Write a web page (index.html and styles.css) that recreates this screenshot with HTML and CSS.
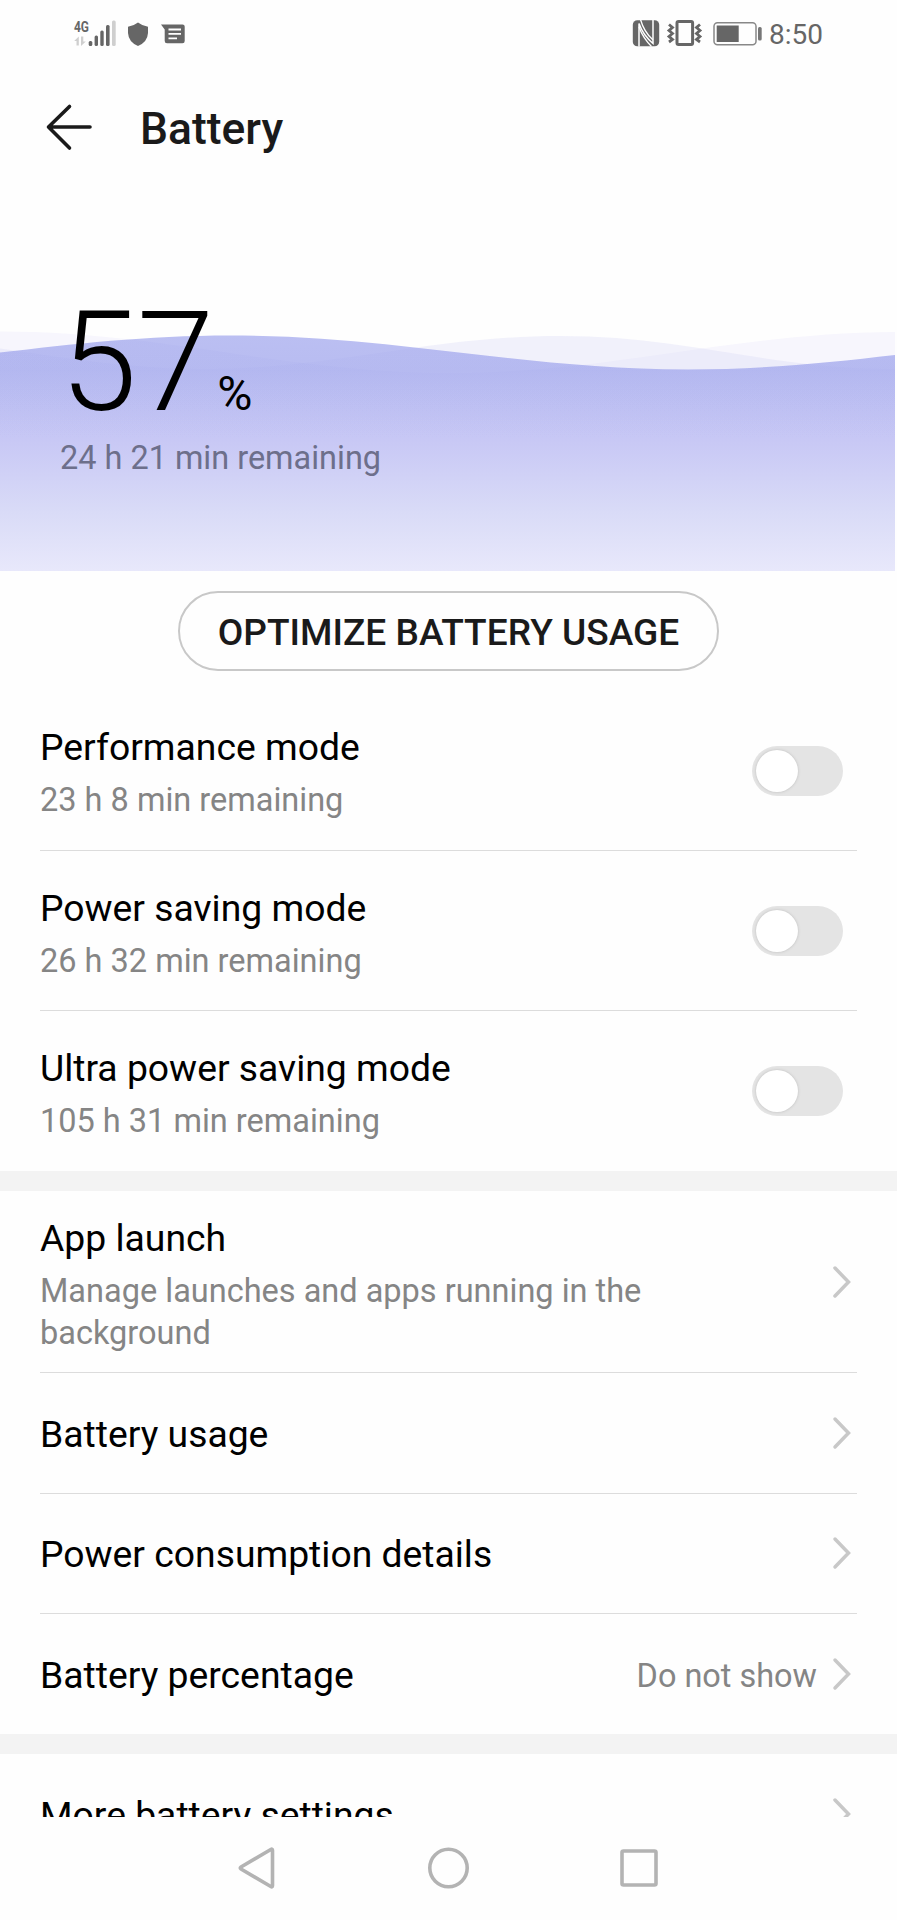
FILE: index.html
```
<!DOCTYPE html>
<html lang="en">
	<head>
		<meta charset="UTF-8">
		<title>Battery</title>
		<link rel="stylesheet" href="styles.css">
	</head>
	<body>
		<div class="screen">
			<div class="status">
				<svg class="status-left" width="120" height="30" viewBox="70 18 120 30">
					<text class="net" x="74" y="32.3" textLength="15" lengthAdjust="spacingAndGlyphs">4G</text>
					<g fill="#cfcfcf">
						<path d="M78.800 45.500V36.500l-4.600 4.500h2.300v4.500zM81 36.500v9.500l4.800-4.600h-2.500V36.500z"/>
						<rect x="112" y="20.500" width="3.700" height="25.500" rx="1.500"/>
					</g>
					<g fill="#666">
						<rect x="88.700" y="41" width="3.600" height="5" rx="1.500"/>
						<rect x="94.600" y="35.500" width="3.400" height="10.500" rx="1.500"/>
						<rect x="100.300" y="30.500" width="3.400" height="15.500" rx="1.500"/>
						<rect x="106" y="25" width="3.600" height="21" rx="1.500"/>
						<path d="M138 22.500Q142.500 26 148 26.700V33Q147.500 42 138 46Q128.500 42 128 33V26.700Q133.500 26 138 22.500z"/>
						<path d="M161 24.500H182.500Q184.700 24.500 184.700 26.500V41Q184.700 43.200 182.500 43.200H167Q164.700 43.200 164.700 41V29.500z"/>
					</g>
					<path d="M168.500 29.500H181M168.500 33.900H181M168.500 38.300H177" stroke="#fff" stroke-width="1.800"/>
				</svg>
				<svg class="status-right" width="132" height="30" viewBox="631 18 132 30">
					<rect x="632.800" y="20.200" width="26.400" height="26" rx="4.500" fill="#666"/>
					<path d="M639 46.500V23.500Q643 35 653 43.500V20" fill="none" stroke="#fff" stroke-width="1.500"/>
					<path d="M640.500 19.500Q644 32 653 40M639 27Q643 38 651.500 46.500" fill="none" stroke="#fff" stroke-width="1.300"/>
					<g fill="none" stroke="#666">
						<rect x="677" y="21.600" width="15.600" height="23" rx="1.500" stroke-width="3"/>
						<path d="M669 24.500l3.500 3-3.500 3 3.500 3-3.500 3 3.500 3-3.500 2.500M700 24.500l-3.500 3 3.500 3-3.500 3 3.500 3-3.500 3 3.500 2.500" stroke-width="2.800"/>
						<rect x="714" y="22.700" width="42" height="22" rx="3.500" stroke="#888" stroke-width="1.500"/>
					</g>
					<rect x="716.700" y="25.500" width="22" height="16.500" fill="#666"/>
					<rect x="758" y="27" width="3.700" height="13.500" rx="1.500" fill="#777"/>
				</svg>
				<span class="clock">8:50</span>
			</div>

			<div class="title-bar">
				<svg width="48" height="50" viewBox="0 0 48 50">
					<path d="M24.500 4.500L3.500 25L24.500 46M3.500 25H45" fill="none" stroke="#1a1a1a" stroke-width="3.600" stroke-linecap="round" stroke-linejoin="round"/>
				</svg>
				<h1>Battery</h1>
			</div>

			<div class="level">
				<svg class="waves" width="895" height="271" viewBox="0 300 895 271">
					<defs>
						<linearGradient id="water" gradientUnits="userSpaceOnUse" x1="0" y1="335" x2="0" y2="571">
							<stop offset="0" stop-color="#bbbff2"/>
							<stop offset="0.150" stop-color="#b8bcf1"/>
							<stop offset="0.450" stop-color="#c8c8f5"/>
							<stop offset="0.750" stop-color="#d9dbf7"/>
							<stop offset="1" stop-color="#e8e8fb"/>
						</linearGradient>
						<linearGradient id="shade" gradientUnits="userSpaceOnUse" x1="0" y1="335" x2="0" y2="440">
							<stop offset="0" stop-color="#8d92e6" stop-opacity="0.080"/>
							<stop offset="1" stop-color="#8d92e6" stop-opacity="0"/>
						</linearGradient>
						<clipPath id="front">
							<path d="M-228 369.500C-61 369.500 63 335.500 230 335.500S521 369.500 688 369.500S979 335.500 1146 335.500V571H-228z"/>
						</clipPath>
					</defs>
					<path d="M-450 373C-286 373-164 331.500 0 331.500S286 373 450 373S736 332 900 332V571H-450z" fill="#f7f6fd"/>
					<path d="M-150 336C-21 336 76 369 205 369S431 336 560 336S766 369 895 369V571H-150z" fill="#d8d8f6" fill-opacity="0.320"/>
					<g clip-path="url(#front)">
						<rect y="330" width="895" height="241" fill="url(#water)"/>
						<path d="M-450 373C-286 373-164 331.500 0 331.500S286 373 450 373S736 332 900 332V571H-450z" fill="url(#shade)"/>
						<path d="M-150 336C-21 336 76 369 205 369S431 336 560 336S766 369 895 369V571H-150z" fill="url(#shade)"/>
					</g>
				</svg>
				<div class="percent"><span class="num">57</span><span class="sign">%</span></div>
				<p class="remain">24 h 21 min remaining</p>
			</div>

			<div class="optimize">
				<button type="button">OPTIMIZE BATTERY USAGE</button>
			</div>

			<ul class="list modes">
				<li>
					<div class="text"><h2>Performance mode</h2><p>23 h 8 min remaining</p></div>
					<span class="switch"></span>
				</li>
				<li>
					<div class="text"><h2>Power saving mode</h2><p>26 h 32 min remaining</p></div>
					<span class="switch"></span>
				</li>
				<li>
					<div class="text"><h2>Ultra power saving mode</h2><p>105 h 31 min remaining</p></div>
					<span class="switch"></span>
				</li>
			</ul>

			<ul class="list links">
				<li class="tall">
					<div class="text"><h2>App launch</h2><p>Manage launches and apps running in the background</p></div>
					<svg class="arrow" width="20" height="34" viewBox="0 0 20 34"><path d="M3 3L16.500 17L3 31"/></svg>
				</li>
				<li>
					<div class="text"><h2>Battery usage</h2></div>
					<svg class="arrow" width="20" height="34" viewBox="0 0 20 34"><path d="M3 3L16.500 17L3 31"/></svg>
				</li>
				<li>
					<div class="text"><h2>Power consumption details</h2></div>
					<svg class="arrow" width="20" height="34" viewBox="0 0 20 34"><path d="M3 3L16.500 17L3 31"/></svg>
				</li>
				<li>
					<div class="text"><h2>Battery percentage</h2></div>
					<span class="value">Do not show</span>
					<svg class="arrow" width="20" height="34" viewBox="0 0 20 34"><path d="M3 3L16.500 17L3 31"/></svg>
				</li>
			</ul>

			<ul class="list links more">
				<li>
					<div class="text"><h2>More battery settings</h2></div>
					<svg class="arrow" width="20" height="34" viewBox="0 0 20 34"><path d="M3 3L16.500 17L3 31"/></svg>
				</li>
			</ul>

			<div class="nav">
				<svg width="44" height="44" viewBox="0 0 44 44"><path d="M38.500 4.500Q38.500 2.500 36.800 3.500L7 21Q5.500 22 7 23L36.800 40.500Q38.500 41.500 38.500 39.500z"/></svg>
				<svg width="44" height="44" viewBox="0 0 44 44"><circle cx="22.500" cy="22" r="18.700"/></svg>
				<svg width="44" height="44" viewBox="0 0 44 44"><rect x="4" y="5" width="34" height="34" rx="1.500"/></svg>
			</div>
		</div>
	</body>
</html>
```

FILE: styles.css
```
* {
	margin: 0;
	padding: 0;
	box-sizing: border-box;
}
ul, li {
	list-style: none;
}
body {
	background: #fefefe;
	font-family: Roboto, "Liberation Sans", sans-serif;
	color: #000;
}
h1, h2 {
	font-weight: 400;
}

.screen {
	width: 897px;
	height: 1920px;
	display: flex;
	flex-direction: column;
	overflow: hidden;
}

/* status bar */
.status {
	height: 68px;
	padding: 18px 74px 0 70px;
	display: flex;
	align-items: flex-start;
}
.status-right {
	margin-left: auto;
}
.net {
	font-size: 15.500px;
	font-weight: 700;
	fill: #666;
}
.clock {
	margin-left: 6px;
	width: 54px;
	font-size: 28px;
	line-height: 33px;
	color: #666;
	white-space: nowrap;
}

/* title */
.title-bar {
	height: 120px;
	padding: 34px 0 0 45px;
	display: flex;
}
.title-bar h1 {
	margin-left: 47px;
	font-size: 44.400px;
	font-weight: 500;
	line-height: 55px;
	color: #1a1a1a;
}

/* battery level */
.level {
	position: relative;
	height: 383px;
}
.waves {
	position: absolute;
	left: 0;
	bottom: 0;
}
.percent {
	position: relative;
	height: 240px;
	padding: 93px 0 0 60px;
	display: flex;
	align-items: baseline;
	line-height: 164px;
}
.num {
	font-size: 139px;
	font-weight: 300;
}
.sign {
	margin-left: 3px;
	font-size: 48px;
}
.remain {
	position: relative;
	padding: 11px 0 0 60px;
	font-size: 32.450px;
	line-height: 38px;
	color: #6d6f8b;
}

.optimize {
	height: 120px;
	padding-top: 20px;
	text-align: center;
}
.optimize button {
	width: 541px;
	height: 80px;
	padding-top: 3px;
	border: 2px solid #c8c8c8;
	border-radius: 40px;
	background: #fefefe;
	font: 500 37.100px/74px Roboto, sans-serif;
	color: #1a1a1a;
	white-space: nowrap;
}

/* setting rows */
.list li {
	margin: 0 40px;
	display: flex;
	align-items: center;
	border-bottom: 1.500px solid #dcdcdc;
}
.list li:last-child {
	border-bottom: none;
}
.list .text {
	flex: 1;
}
.list h2 {
	font-size: 37.300px;
	line-height: 44px;
}
.list p {
	font-size: 32.500px;
	line-height: 42.500px;
	color: #858585;
}
.modes {
	height: 480px;
}
.modes li {
	height: 160.200px;
}
.modes .text {
	padding-top: 6px;
}
.modes p {
	margin-top: 10px;
}
.switch {
	width: 91px;
	height: 50px;
	margin: 0 14px 0 0;
	padding: 4px;
	border-radius: 25px;
	background: #e4e4e4;
}
.switch::before {
	content: "";
	display: block;
	width: 42px;
	height: 42px;
	border-radius: 50%;
	background: #fff;
	box-shadow: 0 0 3px #bbb;
}
.modes li:last-child {
	height: 159px;
}
.links {
	border-top: 20px solid #f3f3f3;
}
.links li {
	height: 120.400px;
}
.links li.tall {
	height: 182.300px;
}
.links .text {
	padding-top: 2px;
}
.links .tall .text {
	padding-top: 7px;
}
.links .tall p {
	width: 640px;
	margin-top: 10px;
}
.value {
	margin-right: 15px;
	padding-top: 3px;
	font-size: 32.450px;
	color: #858585;
}
.arrow {
	margin-right: 5px;
	fill: none;
	stroke: #c8c8c8;
	stroke-width: 3.500;
	stroke-linecap: round;
}
.more {
	height: 83px;
	overflow: hidden;
}
.more li {
	height: 119px;
}

/* navigation keys */
.nav {
	flex: 1;
	padding: 29px 0 0 234px;
	display: flex;
	gap: 148px;
}
.nav svg {
	fill: none;
	stroke: #b3b3b3;
	stroke-width: 3.600;
}
```
